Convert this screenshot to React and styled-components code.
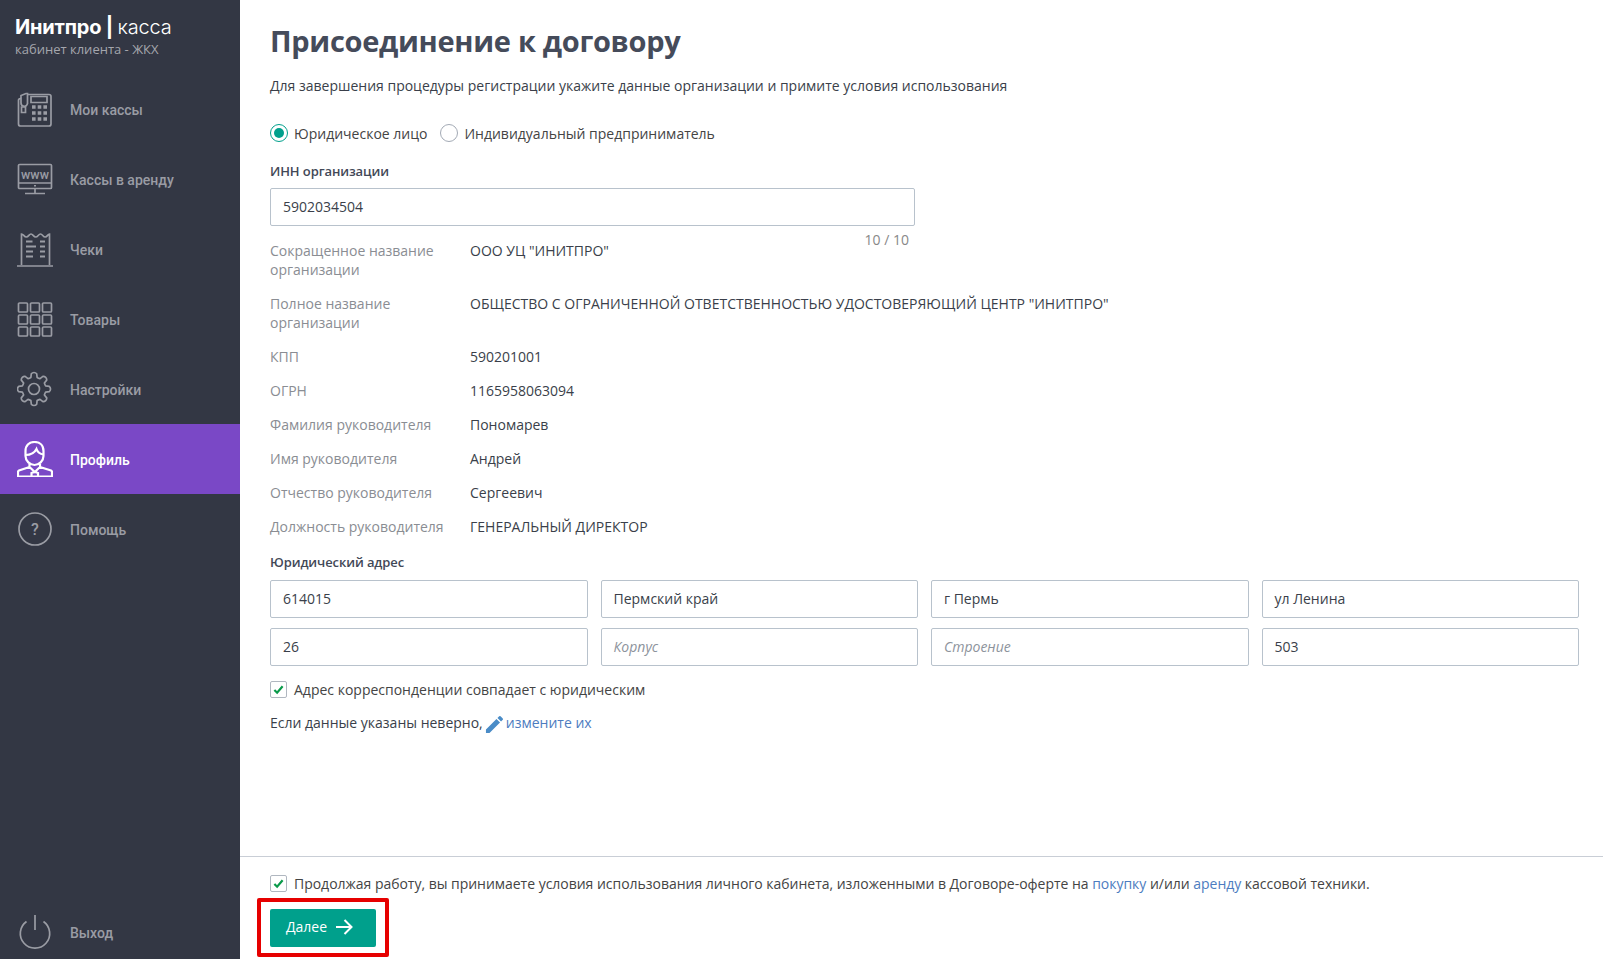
import React from "react";
import styled, { createGlobalStyle } from "styled-components";

const GlobalStyle = createGlobalStyle`
  html, body {
    margin: 0;
    padding: 0;
    height: 100%;
    overflow: hidden;
    background: #fff;
  }
  body {
    font-family: "Open Sans", "Liberation Sans", sans-serif;
    font-size: 14px;
    color: #333;
  }
  * {
    box-sizing: border-box;
  }
`;

const Layout = styled.div`
  display: flex;
  width: 1603px;
  height: 959px;
`;

const Sidebar = styled.aside`
  display: flex;
  flex-direction: column;
  flex: 0 0 240px;
  background: #333744;
`;

const Brand = styled.div`
  height: 74px;
  padding: 14px 0 0 15px;
`;

const BrandTitle = styled.div`
  font-family: "Inter", "Roboto", sans-serif;
  font-size: 20px;
  line-height: 26px;
  font-weight: 700;
  color: #fff;
  letter-spacing: -0.2px;
  span {
    font-weight: 300;
  }
`;

const BrandSub = styled.div`
  font-size: 13px;
  line-height: 18px;
  color: #a4a6ad;
`;

const Menu = styled.nav`
  flex: 1;
  display: flex;
  flex-direction: column;
`;

const MenuItem = styled.div`
  display: flex;
  align-items: center;
  height: 70px;
  padding-left: 17px;
  font-family: "Roboto", sans-serif;
  font-size: 14px;
  font-weight: 500;
  color: ${(props) => (props.$active ? "#fff" : "#9a9ca4")};
  background: ${(props) => (props.$active ? "#7a48c6" : "transparent")};
  ${(props) => props.$bottom && "margin-top: auto; height: 62px; padding-top: 8px;"}
`;

const MenuLabel = styled.span`
  padding-top: 2px;
`;

const MenuIcon = styled.svg`
  flex: 0 0 36px;
  width: 36px;
  height: 36px;
  margin-right: 17px;
  fill: none;
  stroke: currentColor;
  stroke-width: 1.7;
`;

const Main = styled.main`
  flex: 1;
  display: flex;
  flex-direction: column;
  min-width: 0;
`;

const Content = styled.div`
  flex: 1;
  padding: 18px 24px 0 30px;
`;

const Title = styled.h1`
  margin: 0;
  font-size: 29px;
  line-height: 45px;
  font-weight: 700;
  letter-spacing: -0.3px;
  color: #454b5a;
`;

const Lead = styled.p`
  margin: 13px 0 0;
  font-size: 14px;
  line-height: 20px;
  color: #3a3f4a;
`;

const RadioRow = styled.div`
  display: flex;
  align-items: center;
  margin-top: 27px;
  height: 20px;
`;

const RadioLabel = styled.label`
  display: flex;
  align-items: center;
  margin-right: 13px;
  font-size: 14px;
  color: #444;
`;

const RadioMark = styled.span`
  position: relative;
  width: 18px;
  height: 18px;
  margin-right: 6px;
  border-radius: 50%;
  border: 1px solid ${(props) => (props.$on ? "#00a08c" : "#a3aab5")};
  &::after {
    content: "";
    display: ${(props) => (props.$on ? "block" : "none")};
    position: absolute;
    inset: 3px;
    border-radius: 50%;
    background: #00a08c;
  }
`;

const FieldLabel = styled.div`
  font-family: "Open Sans", sans-serif;
  font-size: 13px;
  line-height: 18px;
  font-weight: 600;
  letter-spacing: -0.1px;
  color: #424857;
  margin-top: ${(props) => props.$top || 18}px;
`;

const InnBox = styled.div`
  width: 645px;
  margin-top: 8px;
`;

const Input = styled.div`
  display: flex;
  align-items: center;
  height: 38px;
  padding: 0 12px 2px;
  border: 1px solid #b8c2cc;
  border-radius: 2px;
  font-size: 14px;
  color: ${(props) => (props.$placeholder ? "#8d939c" : "#3a3f4a")};
  font-style: ${(props) => (props.$placeholder ? "italic" : "normal")};
  font-weight: ${(props) => (props.$placeholder ? 400 : 500)};
`;

const Counter = styled.div`
  text-align: right;
  font-size: 14px;
  line-height: 18px;
  color: #888;
  padding-right: 6px;
  height: 3px;
  margin-top: 5px;
`;

const Rows = styled.div`
  display: flex;
  flex-direction: column;
`;

const InfoRow = styled.div`
  display: flex;
  padding: 7px 0 8px;
  font-size: 14px;
  line-height: 19px;
`;

const InfoLabel = styled.div`
  flex: 0 0 200px;
  min-width: 0;
  padding-right: ${(props) => (props.$wrap ? "30px" : "0")};
  color: #8a8d93;
  white-space: ${(props) => (props.$wrap ? "normal" : "nowrap")};
`;

const InfoValue = styled.div`
  color: #3a3f4a;
`;

const AddressGrid = styled.div`
  display: grid;
  grid-template-columns: repeat(4, 1fr);
  gap: 10px 13px;
  margin-top: 9px;
`;

const CheckRow = styled.label`
  display: flex;
  align-items: center;
  font-size: 14px;
  color: #444;
  margin-top: ${(props) => props.$top || 0}px;
`;

const CheckBox = styled.span`
  display: flex;
  align-items: center;
  justify-content: center;
  flex: 0 0 17px;
  height: 17px;
  margin-right: 7px;
  border: 1px solid #b0b7c0;
  border-radius: 2px;
  svg {
    width: 11px;
    height: 11px;
    fill: none;
    stroke: #0a9a4a;
    stroke-width: 2.4;
  }
`;

const Hint = styled.div`
  display: flex;
  align-items: center;
  margin-top: 13px;
  height: 22px;
  font-size: 14px;
  line-height: 20px;
  color: #3a3f4a;
  svg {
    width: 19px;
    height: 19px;
    margin: 3px 2px 0 2px;
    fill: #4a8cc7;
  }
`;

const Link = styled.a`
  color: #4d7cc0;
`;

const Footer = styled.div`
  flex: 0 0 103px;
  padding: 17px 0 0 30px;
  border-top: 1px solid #c9ced6;
  letter-spacing: -0.024px;
`;

const ButtonWrap = styled.div`
  position: relative;
  width: 106px;
  margin-top: 16px;
`;

const NextButton = styled.button`
  display: flex;
  align-items: center;
  width: 106px;
  height: 38px;
  padding: 0 0 3px 16px;
  border: 0;
  border-radius: 2px;
  background: #00a08c;
  color: #fff;
  font-family: "Open Sans", sans-serif;
  font-size: 14px;
  svg {
    width: 20px;
    height: 20px;
    margin: 1px 0 0 7px;
    fill: none;
    stroke: #fff;
    stroke-width: 2;
  }
`;

const Callout = styled.div`
  position: absolute;
  top: -11px;
  left: -13px;
  width: 132px;
  height: 59px;
  border: 4px solid #e60000;
  border-radius: 2px;
  pointer-events: none;
`;

// eight rounded teeth round the centre of a 36 box
const gearPath = () => {
  const point = (deg, r) => {
    const a = (deg * Math.PI) / 180;
    return `${(17 + r * Math.cos(a)).toFixed(2)} ${(18 + r * Math.sin(a)).toFixed(2)}`;
  };
  let d = "";
  for (let i = 0; i < 8; i++) {
    const c = i * 45 - 90;
    d += `${i === 0 ? "M" : "L"}${point(c - 15, 12)} `;
    d += `L${point(c - 10, 15.5)} A3.5 3.5 0 0 1 ${point(c + 10, 15.5)} L${point(c + 15, 12)} `;
    d += `A12 12 0 0 0 ${point(c + 30, 12)} `;
  }
  return d + "Z";
};

const icons = {
  phone: (
    <>
      <path d="M10 3.500H32a2 2 0 0 1 2 2V33a2 2 0 0 1-2 2H3.500a2 2 0 0 1-2-2V9.500a2 2 0 0 1 2-2H4" />
      <path d="M4 12V4.500L9 2.500h1.500V13M4 12a3 3 0 0 0 6.500 0" />
      <path d="M14 5.500h16v6H14zM4.500 16h4v5.500h-4z" />
      <path strokeWidth="3.400" strokeDasharray="3.600 2.100" d="M15 16h15.500M15 22h15.500M15 28h15.500" />
    </>
  ),
  www: (
    <>
      <rect x="1.500" y="3.500" width="33" height="24" rx="1" />
      <path d="M1.500 22h33M18 27.500v4.500M8 32.500h20" />
      <path strokeWidth="2" d="M18 24v1.500" />
      <text x="4" y="18" fontSize="12.500" textLength="28" lengthAdjust="spacing" fill="currentColor" stroke="none" fontFamily="Roboto">www</text>
    </>
  ),
  receipt: (
    <>
      <path d="M0 35h36M4.500 34V3c2 0 2.500 3 4.800 3s2.800-3 4.700-3 2.500 3 4.700 3 2.800-3 4.800-3 2.500 3 4.700 3 2.500-3 4.300-3v31" />
      <path strokeWidth="2" d="M9 10.500h6.500M23 10.500h5M9 15.500h10M23 15.500h5M9 20.500h7M23 20.500h5M9 25.500h7M23 25.500h5" />
    </>
  ),
  grid: (
    <>
      {[0, 1, 2].flatMap((r) =>
        [0, 1, 2].map((c) => (
          <rect key={`${r}${c}`} x={1.500 + c * 12} y={2 + r * 12} width="9" height="9" rx="1" />
        ))
      )}
    </>
  ),
  gear: (
    <>
      <circle cx="17" cy="18" r="5.500" />
      <path d={gearPath()} strokeLinejoin="round" />
    </>
  ),
  user: (
    <>
      <path strokeWidth="2.200" d="M8.500 10c0-6 4-9 9-9s9 3 9 9v5c0 5-4.500 9-9 9s-9-4-9-9z" />
      <path strokeWidth="2.200" d="M8.500 14c4.500 0 9-2 11-6 1 3 3.500 5 7 5.500" />
      <path strokeWidth="2.200" d="M12.500 23v3L2 29.500a2 2 0 0 0-1 2V35.500h34v-4a2 2 0 0 0-1-2L23 26v-3M12.500 26l5.300 5 5.200-5M14.500 35v-3l3.300-1 3.200 1v3" />
    </>
  ),
  help: (
    <>
      <circle cx="18" cy="18" r="16" />
      <text x="18" y="24" fontSize="16" textAnchor="middle" fill="currentColor" stroke="none" fontFamily="Roboto">?</text>
    </>
  ),
  power: (
    <>
      <path d="M18 1v15" />
      <path d="M9.500 7.500a14.700 14.700 0 1 0 17 0" />
    </>
  ),
};

const menu = [
  ["phone", "Мои кассы"],
  ["www", "Кассы в аренду"],
  ["receipt", "Чеки"],
  ["grid", "Товары"],
  ["gear", "Настройки"],
  ["user", "Профиль", true],
  ["help", "Помощь"],
];

const info = [
  ["Сокращенное название организации", 'ООО УЦ "ИНИТПРО"', true],
  ["Полное название организации", 'ОБЩЕСТВО С ОГРАНИЧЕННОЙ ОТВЕТСТВЕННОСТЬЮ УДОСТОВЕРЯЮЩИЙ ЦЕНТР "ИНИТПРО"', true],
  ["КПП", "590201001"],
  ["ОГРН", "1165958063094"],
  ["Фамилия руководителя", "Пономарев"],
  ["Имя руководителя", "Андрей"],
  ["Отчество руководителя", "Сергеевич"],
  ["Должность руководителя", "ГЕНЕРАЛЬНЫЙ ДИРЕКТОР"],
];

const address = [
  ["614015"],
  ["Пермский край"],
  ["г Пермь"],
  ["ул Ленина"],
  ["26"],
  ["Корпус", true],
  ["Строение", true],
  ["503"],
];

const Check = () => (
  <CheckBox>
    <svg viewBox="0 0 12 12">
      <path d="M1.500 6.500L4.500 9.500L10.500 2.500" />
    </svg>
  </CheckBox>
);

const App = () => {
  return (
    <Layout>
      <GlobalStyle />
      <Sidebar>
        <Brand>
          <BrandTitle>
            Инитпро | <span>касса</span>
          </BrandTitle>
          <BrandSub>кабинет клиента - ЖКХ</BrandSub>
        </Brand>
        <Menu>
          {menu.map(([icon, label, active]) => (
            <MenuItem key={label} $active={active}>
              <MenuIcon viewBox="0 0 36 36">{icons[icon]}</MenuIcon>
              <MenuLabel>{label}</MenuLabel>
            </MenuItem>
          ))}
          <MenuItem $bottom>
            <MenuIcon viewBox="0 0 36 36">{icons.power}</MenuIcon>
            <MenuLabel>Выход</MenuLabel>
          </MenuItem>
        </Menu>
      </Sidebar>
      <Main>
        <Content>
          <Title>Присоединение к договору</Title>
          <Lead>Для завершения процедуры регистрации укажите данные организации и примите условия использования</Lead>
          <RadioRow>
            <RadioLabel>
              <RadioMark $on />
              Юридическое лицо
            </RadioLabel>
            <RadioLabel>
              <RadioMark />
              Индивидуальный предприниматель
            </RadioLabel>
          </RadioRow>
          <FieldLabel $top={19}>ИНН организации</FieldLabel>
          <InnBox>
            <Input>5902034504</Input>
            <Counter>10 / 10</Counter>
          </InnBox>
          <Rows>
            {info.map(([label, value, wrap]) => (
              <InfoRow key={label}>
                <InfoLabel $wrap={wrap}>{label}</InfoLabel>
                <InfoValue>{value}</InfoValue>
              </InfoRow>
            ))}
          </Rows>
          <FieldLabel $top={9}>Юридический адрес</FieldLabel>
          <AddressGrid>
            {address.map(([value, placeholder]) => (
              <Input key={value} $placeholder={placeholder}>
                {value}
              </Input>
            ))}
          </AddressGrid>
          <CheckRow $top={14}>
            <Check />
            Адрес корреспонденции совпадает с юридическим
          </CheckRow>
          <Hint>
            Если данные указаны неверно,
            <svg viewBox="2 2 20 20">
              <path d="M3 17.250V21h3.750L17.810 9.940l-3.750-3.750L3 17.250zM20.710 7.040a1 1 0 0 0 0-1.410l-2.340-2.340a1 1 0 0 0-1.410 0l-1.830 1.830 3.750 3.750 1.830-1.830z" />
            </svg>
            <Link>измените их</Link>
          </Hint>
        </Content>
        <Footer>
          <CheckRow>
            <Check />
            <span>
              Продолжая работу, вы принимаете условия использования личного кабинета, изложенными в Договоре-оферте на{" "}
              <Link>покупку</Link> и/или <Link>аренду</Link> кассовой техники.
            </span>
          </CheckRow>
          <ButtonWrap>
            <NextButton>
              Далее
              <svg viewBox="0 0 20 20">
                <path d="M2 10h15M10.500 3l7 7-7 7" />
              </svg>
            </NextButton>
            <Callout />
          </ButtonWrap>
        </Footer>
      </Main>
    </Layout>
  );
};

export default App;
